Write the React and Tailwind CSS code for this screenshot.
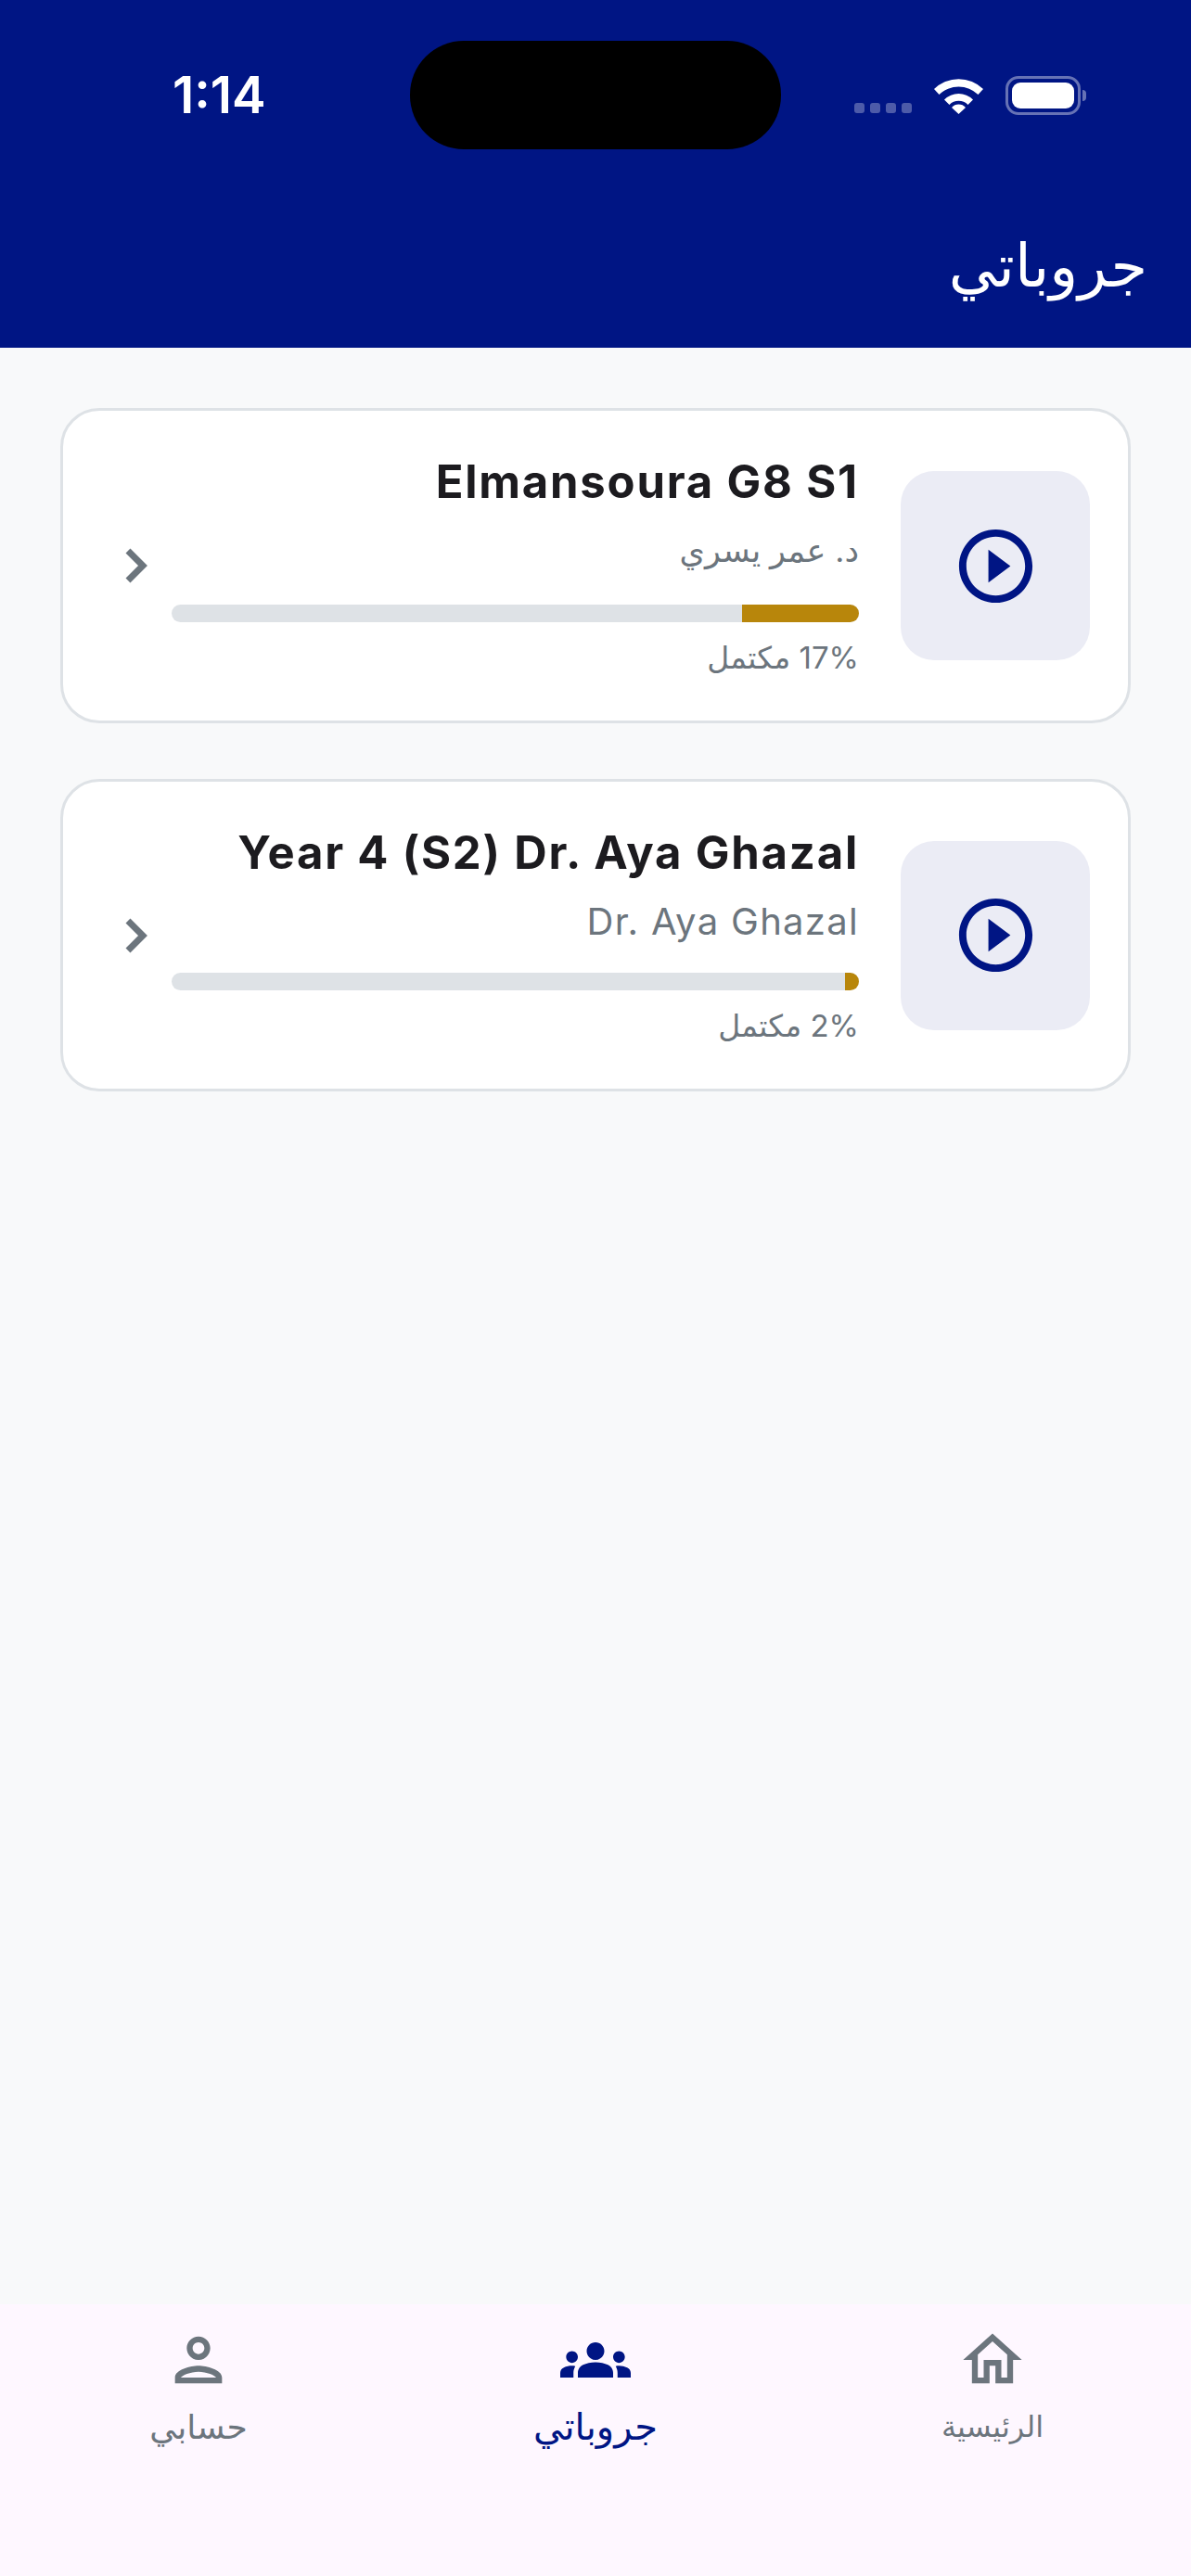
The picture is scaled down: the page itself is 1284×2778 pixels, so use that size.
import React from "react";
import { MdPlayCircleOutline, MdOutlinePerson, MdGroups, MdOutlineHome } from "react-icons/md";

const groups = [
  { id: 1, title: "Elmansoura G8 S1", teacher: "د. عمر يسري", percent: 17, subClass: "h-[98px] pt-[4px] text-[35px]" },
  { id: 2, title: "Year 4 (S2) Dr. Aya Ghazal", teacher: "Dr. Aya Ghazal", percent: 2, subClass: "h-[95px] pt-[5px] text-[40px] tracking-[1.3px]" },
];

const tabs = [
  { id: "home", label: "الرئيسية", icon: MdOutlineHome, labelClass: "text-[32px] text-[#6c757d]" },
  { id: "groups", label: "جروباتي", icon: MdGroups, active: true, labelClass: "text-[40px] text-[#001584]" },
  { id: "account", label: "حسابي", icon: MdOutlinePerson, labelClass: "text-[36px] text-[#6c757d]" },
];

function StatusBar() {
  return (
    <div dir="ltr" className="flex pt-[44px] h-[161px]">
      <div className="w-[442px] pl-[186px] flex items-center text-white text-[55px] font-semibold font-['Inter',sans-serif]">
        1:14
      </div>
      <div className="w-[400px] h-[117px] bg-black rounded-[58px]"></div>
      <div className="flex items-end pl-[79px] pb-[37px]">
        <div className="flex gap-[6px] mb-[2px]">
          <div className="w-[11px] h-[11px] rounded-[3px] bg-white/30"></div>
          <div className="w-[11px] h-[11px] rounded-[3px] bg-white/30"></div>
          <div className="w-[11px] h-[11px] rounded-[3px] bg-white/30"></div>
          <div className="w-[11px] h-[11px] rounded-[3px] bg-white/30"></div>
        </div>
        <svg className="ml-[24px] mb-[1px]" width="53" height="40" viewBox="0 0 53 40">
          <path d="M0 13 A38 38 0 0 1 53 13 L47.5 19 A30 30 0 0 0 5.5 19 Z" fill="#fff" />
          <path d="M11 24.5 A22 22 0 0 1 42 24.5 L36.5 30 A14 14 0 0 0 16.5 30 Z" fill="#fff" />
          <path d="M19 33 A10 10 0 0 1 34 33 L26.5 40 Z" fill="#fff" />
        </svg>
        <div className="flex items-center ml-[24px]">
          <div className="w-[81px] h-[42px] rounded-[14px] border-[3px] border-white/40 p-[4px]">
            <div className="w-full h-full bg-white rounded-[9px]"></div>
          </div>
          <div className="w-[4px] h-[12px] ml-[2px] bg-white/40 rounded-r-full"></div>
        </div>
      </div>
    </div>
  );
}

function GroupCard({ group }) {
  return (
    <div className="flex items-center h-fit bg-white border-[3px] border-[#dee2e6] rounded-[42px] pr-[41px] pl-[67px] pt-[40px] pb-[40px]">
      <div className="w-[204px] h-[204px] shrink-0 rounded-[36px] bg-[#ebecf5] flex items-center justify-center">
        <MdPlayCircleOutline size={95} color="#001584" />
      </div>
      <div className="w-[741px] mr-[45px] text-right">
        <div className="h-[71px] leading-[73px] text-[49px] font-bold tracking-[1.8px] text-[#1c1b1f]">
          {group.title}
        </div>
        <div className={"leading-[70px] text-[#6c757d] " + group.subClass}>{group.teacher}</div>
        <div className="h-[19px] rounded-full bg-[#dee2e6] overflow-hidden">
          <div className="h-full bg-[#b8860b]" style={{ width: group.percent + "%" }}></div>
        </div>
        <div className="mt-[10px] h-[56px] leading-[56px] text-[33px] text-[#6c757d]">
          {group.percent}% مكتمل
        </div>
      </div>
      <svg className="mr-[26px] shrink-0" width="24" height="38" viewBox="0 0 24 38">
        <polyline points="3,3 19,19 3,35" fill="none" stroke="#6c757d" strokeWidth="7" />
      </svg>
    </div>
  );
}

function BottomNav() {
  return (
    <div className="h-[293px] bg-[#fef7ff] grid grid-cols-3 pt-[22px]">
      {tabs.map((tab) => {
        const Icon = tab.icon;
        return (
          <div key={tab.id} className="flex flex-col items-center">
            <Icon size={76} color={tab.active ? "#001584" : "#6c757d"} />
            <div className={"mt-[9px] leading-[50px] " + tab.labelClass}>{tab.label}</div>
          </div>
        );
      })}
    </div>
  );
}

export default function App() {
  return (
    <div dir="rtl" className="w-[1284px] h-[2778px] flex flex-col bg-[#f8f9fa] font-['Inter','DejaVu_Sans',sans-serif]">
      <div className="h-[375px] bg-[#001584]">
        <StatusBar />
        <div className="pr-[47px] pt-[85px] text-white text-[64px] leading-[80px]">جروباتي</div>
      </div>
      {/* Groups list */}
      <div className="flex-1 flex flex-col gap-[60px] px-[65px] pt-[65px]">
        {groups.map((group) => (
          <GroupCard key={group.id} group={group} />
        ))}
      </div>
      <BottomNav />
    </div>
  );
}
